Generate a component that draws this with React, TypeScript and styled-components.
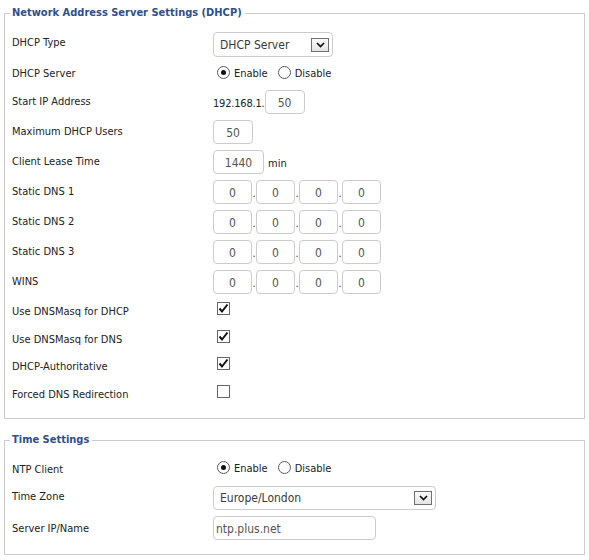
import React from "react";
import styled, { createGlobalStyle } from "styled-components";

const GlobalStyle = createGlobalStyle`
  body {
    margin: 0;
    background: #fff;
    font-family: "DejaVu Sans Condensed", "DejaVu Sans", sans-serif;
    font-size: 11px;
    color: #222;
  }
`;

const Page = styled.div`
  padding: 5px 4px 0;
`;

const Fieldset = styled.fieldset<{ $pt: number; $pb: number; $mb: number }>`
  margin: 0 0 ${(p) => p.$mb}px;
  border: 1px solid #cccccc;
  padding: ${(p) => p.$pt}px 7px ${(p) => p.$pb}px;
  min-width: 0;
`;

const Legend = styled.legend`
  margin-left: -2px;
  padding: 0 3px 0 2px;
  font-weight: bold;
  font-size: 11px;
  line-height: 16px;
  color: #304f8c;
`;

const Row = styled.div<{ $h: number }>`
  display: flex;
  align-items: flex-start;
  height: ${(p) => p.$h}px;
`;

const Label = styled.div<{ $pt: number }>`
  flex: none;
  width: 201px;
  padding-top: ${(p) => p.$pt}px;
  line-height: 13px;
  color: #222;
`;

const Controls = styled.div`
  display: flex;
  align-items: baseline;
`;

const TextInput = styled.input<{ $w: number; $align?: string }>`
  box-sizing: border-box;
  width: ${(p) => p.$w}px;
  height: 24px;
  margin: 0;
  padding: 2px 2px 0;
  border: 1px solid #cccccc;
  border-radius: 4px;
  background: #fff;
  font-family: inherit;
  font-size: 12px;
  color: #555;
  text-align: ${(p) => p.$align || "center"};
  outline: none;
`;

const Prefix = styled.span`
  margin-right: 0;
  line-height: 13px;
  letter-spacing: -0.2px;
`;

const Unit = styled.span`
  margin-left: 4px;
  line-height: 13px;
`;

const Dot = styled.span`
  width: 4px;
  text-align: center;
  line-height: 13px;
  color: #333;
`;

const SelectBox = styled.div<{ $w: number; $h: number }>`
  box-sizing: border-box;
  width: ${(p) => p.$w}px;
  height: ${(p) => p.$h}px;
  border: 1px solid #cccccc;
  border-radius: 4px;
  background: #fff;
  display: flex;
  align-items: center;
  justify-content: space-between;
  padding: 0 3px 0 6px;
  font-size: 12px;
  color: #3a3a3a;
`;

const ArrowBtn = styled.span`
  box-sizing: border-box;
  width: 18px;
  height: 14px;
  border: 1px solid #707070;
  background: linear-gradient(#fbfbfb, #e4e4e4);
  display: flex;
  align-items: center;
  justify-content: center;
`;

const RadioGroup = styled.div`
  display: flex;
  align-items: flex-start;
  line-height: 16px;
`;

const RadioOption = styled.label<{ $first?: boolean }>`
  display: flex;
  align-items: flex-start;
  gap: 4px;
  margin-left: ${(p) => (p.$first ? 4 : 10)}px;
  color: #222;
`;

const RadioCircle = styled.span<{ $on?: boolean }>`
  box-sizing: border-box;
  width: 13px;
  height: 13px;
  border-radius: 50%;
  border: 1px solid #5a5a5a;
  background: #fff;
  display: flex;
  align-items: center;
  justify-content: center;
  &::after {
    content: "";
    width: 5px;
    height: 5px;
    border-radius: 50%;
    background: ${(p) => (p.$on ? "#111" : "transparent")};
  }
`;

const CheckBox = styled.span`
  box-sizing: border-box;
  margin-left: 4px;
  width: 13px;
  height: 13px;
  border: 1px solid #666;
  background: #fff;
  display: flex;
  align-items: center;
  justify-content: center;
`;

const Chevron = () => (
  <svg width="9" height="6" viewBox="0 0 9 6">
    <polyline points="1,1 4.5,4.5 8,1" fill="none" stroke="#111" strokeWidth="1.7" />
  </svg>
);

const Tick = () => (
  <svg width="11" height="11" viewBox="0 0 11 11">
    <polyline points="1.5,5.5 4,8.5 9.5,1.5" fill="none" stroke="#111" strokeWidth="2" />
  </svg>
);

const Select = ({ value, w, h }: { value: string; w: number; h: number }) => (
  <SelectBox $w={w} $h={h}>
    <span>{value}</span>
    <ArrowBtn>
      <Chevron />
    </ArrowBtn>
  </SelectBox>
);

const EnableDisable = ({ on }: { on: boolean }) => (
  <RadioGroup>
    <RadioOption $first>
      <RadioCircle $on={on} />
      <span>Enable</span>
    </RadioOption>
    <RadioOption>
      <RadioCircle $on={!on} />
      <span>Disable</span>
    </RadioOption>
  </RadioGroup>
);

const IpFields = () => (
  <Controls>
    {[0, 1, 2, 3].map((i) => (
      <React.Fragment key={i}>
        {i > 0 && <Dot>.</Dot>}
        <TextInput $w={39} defaultValue="0" readOnly />
      </React.Fragment>
    ))}
  </Controls>
);

const checkRows: [string, boolean, number][] = [
  ["Use DNSMasq for DHCP", true, 28],
  ["Use DNSMasq for DNS", true, 27],
  ["DHCP-Authoritative", true, 28],
  ["Forced DNS Redirection", false, 13],
];

const dnsRows: [string, number][] = [
  ["Static DNS 1", 30],
  ["Static DNS 2", 30],
  ["Static DNS 3", 30],
  ["WINS", 32],
];

export default function App() {
  return (
    <Page>
      <GlobalStyle />
      <Fieldset $pt={11} $pb={20} $mb={13}>
        <Legend>Network Address Server Settings (DHCP)</Legend>
        <Row $h={34}>
          <Label $pt={4}>DHCP Type</Label>
          <Select value="DHCP Server" w={120} h={25} />
        </Row>
        <Row $h={24}>
          <Label $pt={1}>DHCP Server</Label>
          <EnableDisable on />
        </Row>
        <Row $h={30}>
          <Label $pt={5}>Start IP Address</Label>
          <Controls>
            <Prefix>192.168.1.</Prefix>
            <TextInput $w={40} defaultValue="50" readOnly />
          </Controls>
        </Row>
        <Row $h={30}>
          <Label $pt={5}>Maximum DHCP Users</Label>
          <Controls>
            <TextInput $w={40} defaultValue="50" readOnly />
          </Controls>
        </Row>
        <Row $h={30}>
          <Label $pt={5}>Client Lease Time</Label>
          <Controls>
            <TextInput $w={51} defaultValue="1440" readOnly />
            <Unit>min</Unit>
          </Controls>
        </Row>
        {dnsRows.map(([label, h]) => (
          <Row $h={h} key={label}>
            <Label $pt={5}>{label}</Label>
            <IpFields />
          </Row>
        ))}
        {checkRows.map(([label, on, h]) => (
          <Row $h={h} key={label}>
            <Label $pt={3}>{label}</Label>
            <CheckBox>{on && <Tick />}</CheckBox>
          </Row>
        ))}
      </Fieldset>
      <Fieldset $pt={13} $pb={14} $mb={0}>
        <Legend>Time Settings</Legend>
        <Row $h={25}>
          <Label $pt={2}>NTP Client</Label>
          <EnableDisable on />
        </Row>
        <Row $h={30}>
          <Label $pt={4}>Time Zone</Label>
          <Select value="Europe/London" w={223} h={24} />
        </Row>
        <Row $h={24}>
          <Label $pt={6}>Server IP/Name</Label>
          <Controls>
            <TextInput $w={163} $align="left" defaultValue="ntp.plus.net" readOnly />
          </Controls>
        </Row>
      </Fieldset>
    </Page>
  );
}
